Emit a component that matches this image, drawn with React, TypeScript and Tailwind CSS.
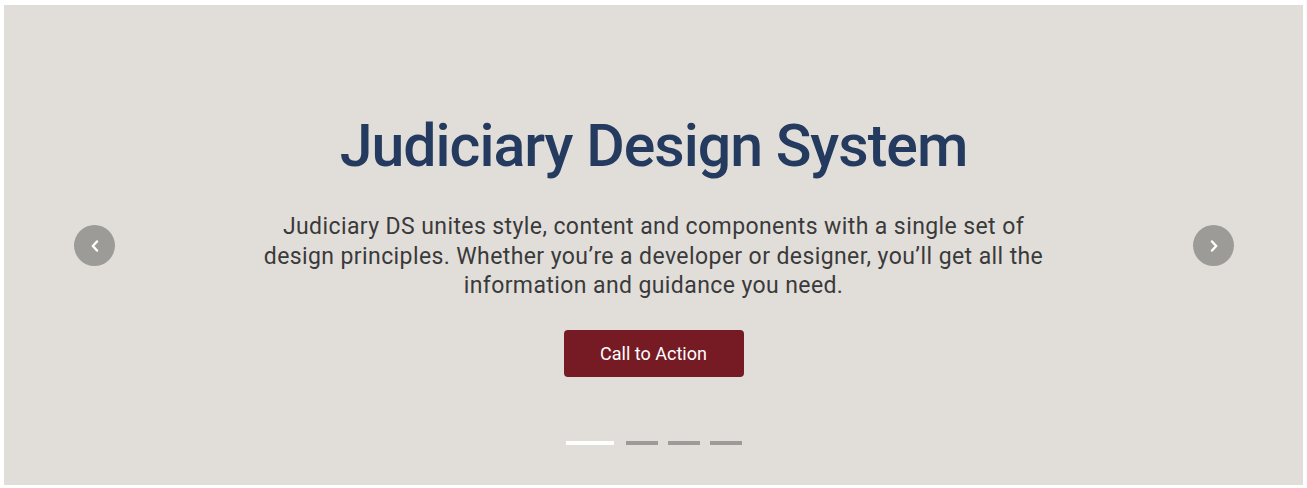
import React from 'react';

const Chevron: React.FC<{ dir: 'left' | 'right' }> = ({ dir }) => (
  <svg width="10" height="12" viewBox="0 0 10 12" fill="none" stroke="white" strokeWidth="2.4" strokeLinecap="round" strokeLinejoin="round">
    {dir === 'left' ? <path d="M7 1.5 2.8 6 7 10.5" /> : <path d="M3 1.5 7.2 6 3 10.5" />}
  </svg>
);

const App: React.FC = () => {
  const slides = [0, 1, 2, 3];
  return (
    <div className="w-[1307px] h-[488px] bg-white pt-[5px] pl-[4px]" style={{ fontFamily: 'Roboto, "Liberation Sans", sans-serif' }}>
      <div className="relative w-[1299px] h-[480px] bg-[#e1deda] flex flex-col items-center pt-[105px]">
        <button className="absolute left-[70px] top-[220px] w-[41px] h-[41px] rounded-full bg-[#9d9b97] flex items-center justify-center">
          <Chevron dir="left" />
        </button>
        <button className="absolute right-[69px] top-[220px] w-[41px] h-[41px] rounded-full bg-[#9d9b97] flex items-center justify-center">
          <Chevron dir="right" />
        </button>

        <h1 className="text-[59px] leading-[72px] font-medium text-[#243a5e] tracking-[-1px]">Judiciary Design System</h1>
        <p className="mt-[30px] w-[800px] text-center text-[23px] leading-[29.5px] tracking-[0.4px] text-[#3a3a3a]">
          Judiciary DS unites style, content and components with a single set of design principles. Whether you’re a developer or designer, you’ll get all the information and guidance you need.
        </p>
        <button className="mt-[29px] w-[180px] h-[47px] rounded-[4px] bg-[#761b24] text-white text-[18px]">Call to Action</button>

        <div className="mt-[64px] flex items-center gap-[10px]">
          {slides.map((i) => (
            <span key={i} className={i === 0 ? 'w-[48px] h-[4px] bg-white mr-[2px]' : 'w-[32px] h-[4px] bg-[#9d9b97]'} />
          ))}
        </div>
      </div>
    </div>
  );
};

export default App;
